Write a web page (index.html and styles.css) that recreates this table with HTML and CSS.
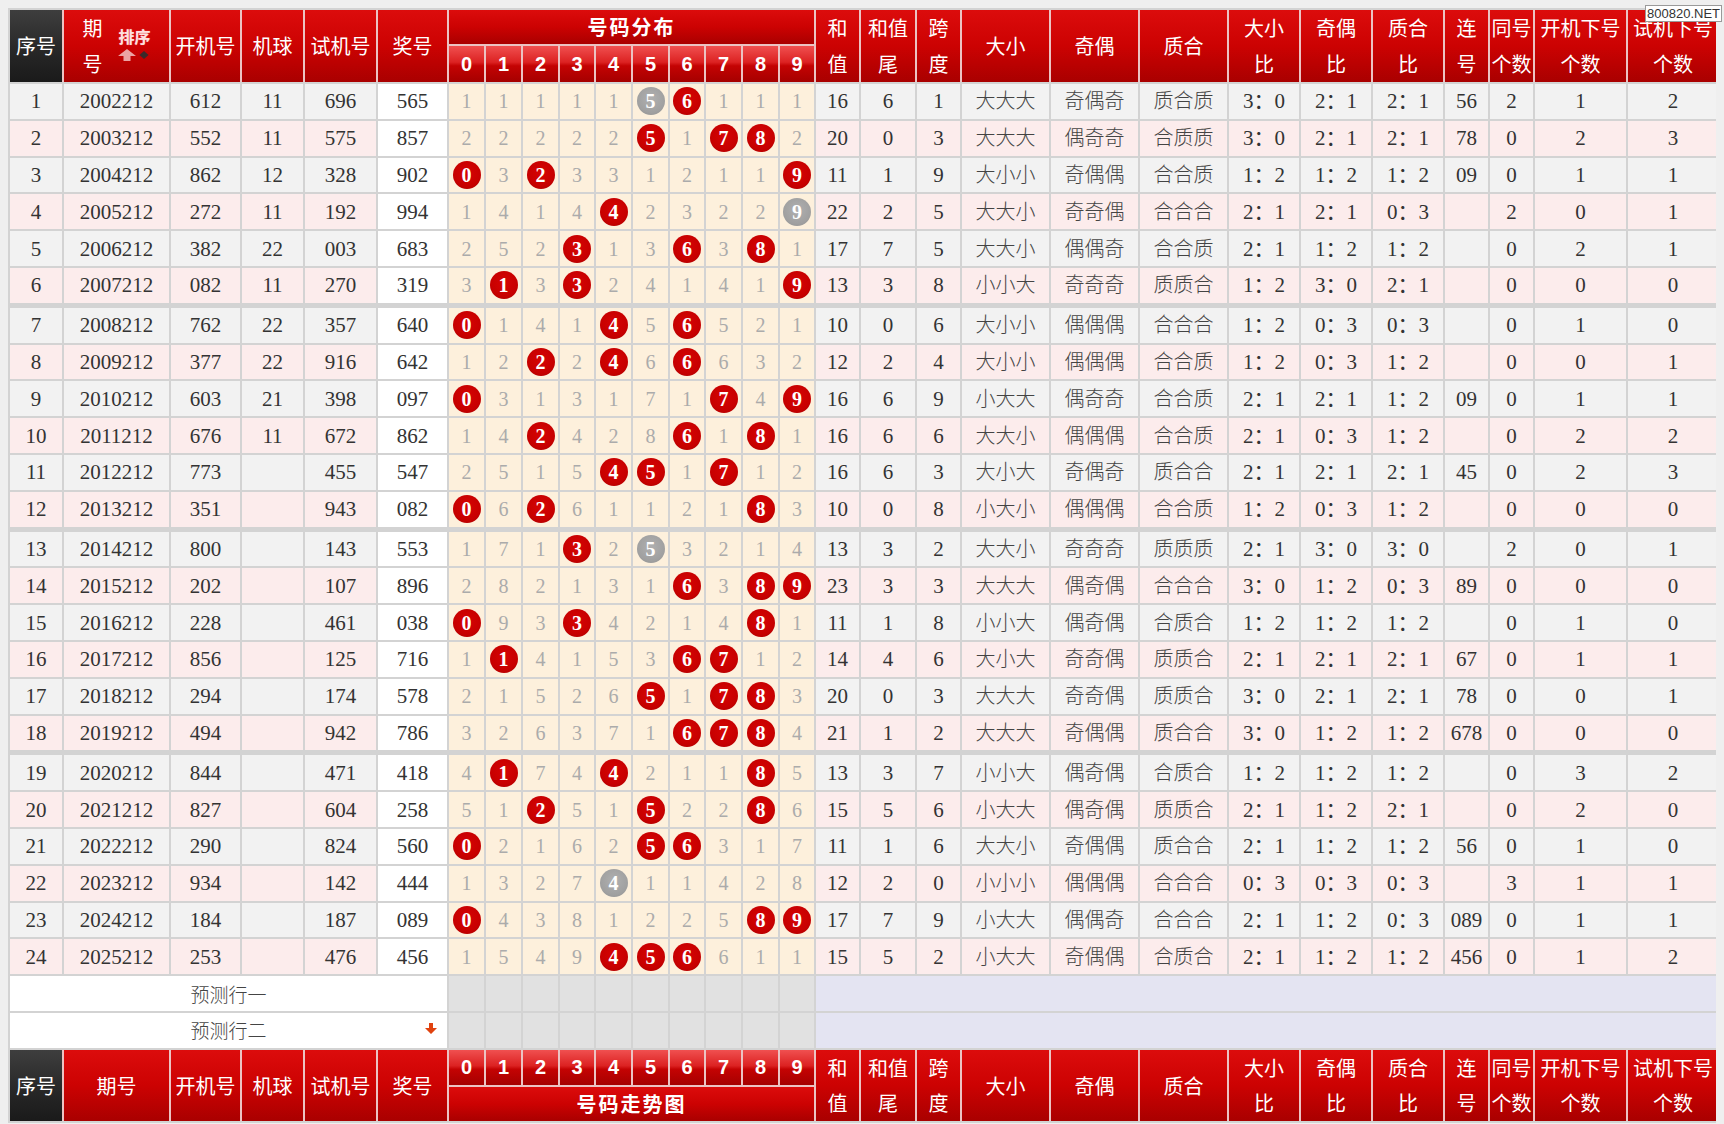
FILE: index.html
```html
<!DOCTYPE html>
<html lang="zh-CN">
<head>
<meta charset="utf-8">
<title>号码走势图</title>
<link rel="stylesheet" href="styles.css">
</head>
<body>
<div class="sheet">
  <div class="head">
    <span class="hc dark">序号</span>
    <span class="hc"><span class="qh">期<br>号</span><span class="sort"><span class="sort-t">排序</span><svg width="32" height="12" viewBox="0 0 32 12"><polygon points="9,0 18,7 12.5,7 12.5,12 5.5,12 5.5,7 0,7" fill="#eba3a3"/><polygon points="26,2 30.5,6 26,10 21.5,6" fill="#3a2a2a"/></svg></span></span>
    <span class="hc">开机号</span>
    <span class="hc">机球</span>
    <span class="hc">试机号</span>
    <span class="hc">奖号</span>
    <span class="hc zone">号码分布</span>
    <span class="hc">和<br>值</span>
    <span class="hc">和值<br>尾</span>
    <span class="hc">跨<br>度</span>
    <span class="hc">大小</span>
    <span class="hc">奇偶</span>
    <span class="hc">质合</span>
    <span class="hc">大小<br>比</span>
    <span class="hc">奇偶<br>比</span>
    <span class="hc">质合<br>比</span>
    <span class="hc">连<br>号</span>
    <span class="hc">同号<br>个数</span>
    <span class="hc">开机下号<br>个数</span>
    <span class="hc">试机下号<br>个数</span>
    <span class="hc dg">0</span><span class="hc dg">1</span><span class="hc dg">2</span><span class="hc dg">3</span><span class="hc dg">4</span><span class="hc dg">5</span><span class="hc dg">6</span><span class="hc dg">7</span><span class="hc dg">8</span><span class="hc dg">9</span>
  </div>

  <div class="r o"><span>1</span><span>2002212</span><span>612</span><span>11</span><span>696</span><span>565</span><span>1</span><span>1</span><span>1</span><span>1</span><span>1</span><span><b class="bl g">5</b></span><span><b class="bl">6</b></span><span>1</span><span>1</span><span>1</span><span>16</span><span>6</span><span>1</span><span>大大大</span><span>奇偶奇</span><span>质合质</span><span>3：0</span><span>2：1</span><span>2：1</span><span>56</span><span>2</span><span>1</span><span>2</span></div>
  <div class="r e"><span>2</span><span>2003212</span><span>552</span><span>11</span><span>575</span><span>857</span><span>2</span><span>2</span><span>2</span><span>2</span><span>2</span><span><b class="bl">5</b></span><span>1</span><span><b class="bl">7</b></span><span><b class="bl">8</b></span><span>2</span><span>20</span><span>0</span><span>3</span><span>大大大</span><span>偶奇奇</span><span>合质质</span><span>3：0</span><span>2：1</span><span>2：1</span><span>78</span><span>0</span><span>2</span><span>3</span></div>
  <div class="r o"><span>3</span><span>2004212</span><span>862</span><span>12</span><span>328</span><span>902</span><span><b class="bl">0</b></span><span>3</span><span><b class="bl">2</b></span><span>3</span><span>3</span><span>1</span><span>2</span><span>1</span><span>1</span><span><b class="bl">9</b></span><span>11</span><span>1</span><span>9</span><span>大小小</span><span>奇偶偶</span><span>合合质</span><span>1：2</span><span>1：2</span><span>1：2</span><span>09</span><span>0</span><span>1</span><span>1</span></div>
  <div class="r e"><span>4</span><span>2005212</span><span>272</span><span>11</span><span>192</span><span>994</span><span>1</span><span>4</span><span>1</span><span>4</span><span><b class="bl">4</b></span><span>2</span><span>3</span><span>2</span><span>2</span><span><b class="bl g">9</b></span><span>22</span><span>2</span><span>5</span><span>大大小</span><span>奇奇偶</span><span>合合合</span><span>2：1</span><span>2：1</span><span>0：3</span><span></span><span>2</span><span>0</span><span>1</span></div>
  <div class="r o"><span>5</span><span>2006212</span><span>382</span><span>22</span><span>003</span><span>683</span><span>2</span><span>5</span><span>2</span><span><b class="bl">3</b></span><span>1</span><span>3</span><span><b class="bl">6</b></span><span>3</span><span><b class="bl">8</b></span><span>1</span><span>17</span><span>7</span><span>5</span><span>大大小</span><span>偶偶奇</span><span>合合质</span><span>2：1</span><span>1：2</span><span>1：2</span><span></span><span>0</span><span>2</span><span>1</span></div>
  <div class="r e"><span>6</span><span>2007212</span><span>082</span><span>11</span><span>270</span><span>319</span><span>3</span><span><b class="bl">1</b></span><span>3</span><span><b class="bl">3</b></span><span>2</span><span>4</span><span>1</span><span>4</span><span>1</span><span><b class="bl">9</b></span><span>13</span><span>3</span><span>8</span><span>小小大</span><span>奇奇奇</span><span>质质合</span><span>1：2</span><span>3：0</span><span>2：1</span><span></span><span>0</span><span>0</span><span>0</span></div>

  <div class="r o gs"><span>7</span><span>2008212</span><span>762</span><span>22</span><span>357</span><span>640</span><span><b class="bl">0</b></span><span>1</span><span>4</span><span>1</span><span><b class="bl">4</b></span><span>5</span><span><b class="bl">6</b></span><span>5</span><span>2</span><span>1</span><span>10</span><span>0</span><span>6</span><span>大小小</span><span>偶偶偶</span><span>合合合</span><span>1：2</span><span>0：3</span><span>0：3</span><span></span><span>0</span><span>1</span><span>0</span></div>
  <div class="r e"><span>8</span><span>2009212</span><span>377</span><span>22</span><span>916</span><span>642</span><span>1</span><span>2</span><span><b class="bl">2</b></span><span>2</span><span><b class="bl">4</b></span><span>6</span><span><b class="bl">6</b></span><span>6</span><span>3</span><span>2</span><span>12</span><span>2</span><span>4</span><span>大小小</span><span>偶偶偶</span><span>合合质</span><span>1：2</span><span>0：3</span><span>1：2</span><span></span><span>0</span><span>0</span><span>1</span></div>
  <div class="r o"><span>9</span><span>2010212</span><span>603</span><span>21</span><span>398</span><span>097</span><span><b class="bl">0</b></span><span>3</span><span>1</span><span>3</span><span>1</span><span>7</span><span>1</span><span><b class="bl">7</b></span><span>4</span><span><b class="bl">9</b></span><span>16</span><span>6</span><span>9</span><span>小大大</span><span>偶奇奇</span><span>合合质</span><span>2：1</span><span>2：1</span><span>1：2</span><span>09</span><span>0</span><span>1</span><span>1</span></div>
  <div class="r e"><span>10</span><span>2011212</span><span>676</span><span>11</span><span>672</span><span>862</span><span>1</span><span>4</span><span><b class="bl">2</b></span><span>4</span><span>2</span><span>8</span><span><b class="bl">6</b></span><span>1</span><span><b class="bl">8</b></span><span>1</span><span>16</span><span>6</span><span>6</span><span>大大小</span><span>偶偶偶</span><span>合合质</span><span>2：1</span><span>0：3</span><span>1：2</span><span></span><span>0</span><span>2</span><span>2</span></div>
  <div class="r o"><span>11</span><span>2012212</span><span>773</span><span></span><span>455</span><span>547</span><span>2</span><span>5</span><span>1</span><span>5</span><span><b class="bl">4</b></span><span><b class="bl">5</b></span><span>1</span><span><b class="bl">7</b></span><span>1</span><span>2</span><span>16</span><span>6</span><span>3</span><span>大小大</span><span>奇偶奇</span><span>质合合</span><span>2：1</span><span>2：1</span><span>2：1</span><span>45</span><span>0</span><span>2</span><span>3</span></div>
  <div class="r e"><span>12</span><span>2013212</span><span>351</span><span></span><span>943</span><span>082</span><span><b class="bl">0</b></span><span>6</span><span><b class="bl">2</b></span><span>6</span><span>1</span><span>1</span><span>2</span><span>1</span><span><b class="bl">8</b></span><span>3</span><span>10</span><span>0</span><span>8</span><span>小大小</span><span>偶偶偶</span><span>合合质</span><span>1：2</span><span>0：3</span><span>1：2</span><span></span><span>0</span><span>0</span><span>0</span></div>

  <div class="r o gs"><span>13</span><span>2014212</span><span>800</span><span></span><span>143</span><span>553</span><span>1</span><span>7</span><span>1</span><span><b class="bl">3</b></span><span>2</span><span><b class="bl g">5</b></span><span>3</span><span>2</span><span>1</span><span>4</span><span>13</span><span>3</span><span>2</span><span>大大小</span><span>奇奇奇</span><span>质质质</span><span>2：1</span><span>3：0</span><span>3：0</span><span></span><span>2</span><span>0</span><span>1</span></div>
  <div class="r e"><span>14</span><span>2015212</span><span>202</span><span></span><span>107</span><span>896</span><span>2</span><span>8</span><span>2</span><span>1</span><span>3</span><span>1</span><span><b class="bl">6</b></span><span>3</span><span><b class="bl">8</b></span><span><b class="bl">9</b></span><span>23</span><span>3</span><span>3</span><span>大大大</span><span>偶奇偶</span><span>合合合</span><span>3：0</span><span>1：2</span><span>0：3</span><span>89</span><span>0</span><span>0</span><span>0</span></div>
  <div class="r o"><span>15</span><span>2016212</span><span>228</span><span></span><span>461</span><span>038</span><span><b class="bl">0</b></span><span>9</span><span>3</span><span><b class="bl">3</b></span><span>4</span><span>2</span><span>1</span><span>4</span><span><b class="bl">8</b></span><span>1</span><span>11</span><span>1</span><span>8</span><span>小小大</span><span>偶奇偶</span><span>合质合</span><span>1：2</span><span>1：2</span><span>1：2</span><span></span><span>0</span><span>1</span><span>0</span></div>
  <div class="r e"><span>16</span><span>2017212</span><span>856</span><span></span><span>125</span><span>716</span><span>1</span><span><b class="bl">1</b></span><span>4</span><span>1</span><span>5</span><span>3</span><span><b class="bl">6</b></span><span><b class="bl">7</b></span><span>1</span><span>2</span><span>14</span><span>4</span><span>6</span><span>大小大</span><span>奇奇偶</span><span>质质合</span><span>2：1</span><span>2：1</span><span>2：1</span><span>67</span><span>0</span><span>1</span><span>1</span></div>
  <div class="r o"><span>17</span><span>2018212</span><span>294</span><span></span><span>174</span><span>578</span><span>2</span><span>1</span><span>5</span><span>2</span><span>6</span><span><b class="bl">5</b></span><span>1</span><span><b class="bl">7</b></span><span><b class="bl">8</b></span><span>3</span><span>20</span><span>0</span><span>3</span><span>大大大</span><span>奇奇偶</span><span>质质合</span><span>3：0</span><span>2：1</span><span>2：1</span><span>78</span><span>0</span><span>0</span><span>1</span></div>
  <div class="r e"><span>18</span><span>2019212</span><span>494</span><span></span><span>942</span><span>786</span><span>3</span><span>2</span><span>6</span><span>3</span><span>7</span><span>1</span><span><b class="bl">6</b></span><span><b class="bl">7</b></span><span><b class="bl">8</b></span><span>4</span><span>21</span><span>1</span><span>2</span><span>大大大</span><span>奇偶偶</span><span>质合合</span><span>3：0</span><span>1：2</span><span>1：2</span><span>678</span><span>0</span><span>0</span><span>0</span></div>

  <div class="r o gs"><span>19</span><span>2020212</span><span>844</span><span></span><span>471</span><span>418</span><span>4</span><span><b class="bl">1</b></span><span>7</span><span>4</span><span><b class="bl">4</b></span><span>2</span><span>1</span><span>1</span><span><b class="bl">8</b></span><span>5</span><span>13</span><span>3</span><span>7</span><span>小小大</span><span>偶奇偶</span><span>合质合</span><span>1：2</span><span>1：2</span><span>1：2</span><span></span><span>0</span><span>3</span><span>2</span></div>
  <div class="r e"><span>20</span><span>2021212</span><span>827</span><span></span><span>604</span><span>258</span><span>5</span><span>1</span><span><b class="bl">2</b></span><span>5</span><span>1</span><span><b class="bl">5</b></span><span>2</span><span>2</span><span><b class="bl">8</b></span><span>6</span><span>15</span><span>5</span><span>6</span><span>小大大</span><span>偶奇偶</span><span>质质合</span><span>2：1</span><span>1：2</span><span>2：1</span><span></span><span>0</span><span>2</span><span>0</span></div>
  <div class="r o"><span>21</span><span>2022212</span><span>290</span><span></span><span>824</span><span>560</span><span><b class="bl">0</b></span><span>2</span><span>1</span><span>6</span><span>2</span><span><b class="bl">5</b></span><span><b class="bl">6</b></span><span>3</span><span>1</span><span>7</span><span>11</span><span>1</span><span>6</span><span>大大小</span><span>奇偶偶</span><span>质合合</span><span>2：1</span><span>1：2</span><span>1：2</span><span>56</span><span>0</span><span>1</span><span>0</span></div>
  <div class="r e"><span>22</span><span>2023212</span><span>934</span><span></span><span>142</span><span>444</span><span>1</span><span>3</span><span>2</span><span>7</span><span><b class="bl g">4</b></span><span>1</span><span>1</span><span>4</span><span>2</span><span>8</span><span>12</span><span>2</span><span>0</span><span>小小小</span><span>偶偶偶</span><span>合合合</span><span>0：3</span><span>0：3</span><span>0：3</span><span></span><span>3</span><span>1</span><span>1</span></div>
  <div class="r o"><span>23</span><span>2024212</span><span>184</span><span></span><span>187</span><span>089</span><span><b class="bl">0</b></span><span>4</span><span>3</span><span>8</span><span>1</span><span>2</span><span>2</span><span>5</span><span><b class="bl">8</b></span><span><b class="bl">9</b></span><span>17</span><span>7</span><span>9</span><span>小大大</span><span>偶偶奇</span><span>合合合</span><span>2：1</span><span>1：2</span><span>0：3</span><span>089</span><span>0</span><span>1</span><span>1</span></div>
  <div class="r e"><span>24</span><span>2025212</span><span>253</span><span></span><span>476</span><span>456</span><span>1</span><span>5</span><span>4</span><span>9</span><span><b class="bl">4</b></span><span><b class="bl">5</b></span><span><b class="bl">6</b></span><span>6</span><span>1</span><span>1</span><span>15</span><span>5</span><span>2</span><span>小大大</span><span>奇偶偶</span><span>合质合</span><span>2：1</span><span>1：2</span><span>1：2</span><span>456</span><span>0</span><span>1</span><span>2</span></div>

  <div class="pr"><span class="pl">预测行一</span><span class="pd"></span><span class="pd"></span><span class="pd"></span><span class="pd"></span><span class="pd"></span><span class="pd"></span><span class="pd"></span><span class="pd"></span><span class="pd"></span><span class="pd"></span><span class="pz"></span></div>
  <div class="pr"><span class="pl">预测行二<svg class="parrow" width="12" height="11" viewBox="0 0 12 11"><polygon points="4,0 8,0 8,5 12,5 6,11 0,5 4,5" fill="#e0420f"/></svg></span><span class="pd"></span><span class="pd"></span><span class="pd"></span><span class="pd"></span><span class="pd"></span><span class="pd"></span><span class="pd"></span><span class="pd"></span><span class="pd"></span><span class="pd"></span><span class="pz"></span></div>

  <div class="head foot">
    <span class="hc dark">序号</span>
    <span class="hc">期号</span>
    <span class="hc">开机号</span>
    <span class="hc">机球</span>
    <span class="hc">试机号</span>
    <span class="hc">奖号</span>
    <span class="hc dg">0</span><span class="hc dg">1</span><span class="hc dg">2</span><span class="hc dg">3</span><span class="hc dg">4</span><span class="hc dg">5</span><span class="hc dg">6</span><span class="hc dg">7</span><span class="hc dg">8</span><span class="hc dg">9</span>
    <span class="hc">和<br>值</span>
    <span class="hc">和值<br>尾</span>
    <span class="hc">跨<br>度</span>
    <span class="hc">大小</span>
    <span class="hc">奇偶</span>
    <span class="hc">质合</span>
    <span class="hc">大小<br>比</span>
    <span class="hc">奇偶<br>比</span>
    <span class="hc">质合<br>比</span>
    <span class="hc">连<br>号</span>
    <span class="hc">同号<br>个数</span>
    <span class="hc">开机下号<br>个数</span>
    <span class="hc">试机下号<br>个数</span>
    <span class="hc zone">号码走势图</span>
  </div>
</div>
<div class="wm">800820.NET</div>
</body>
</html>
```
FILE: styles.css
```css
:root {
  --cols: 52px 105px 69px 61px 71px 69px 35px 35px 35px 34px 35px 35px 34px 35px 35px 34px 43px 54px 43px 87px 87px 87px 70px 70px 70px 43px 43px 91px 90px;
}
html {
  background: #efefef;
}
body {
  margin: 8px;
  background: #efefef;
}
.sheet {
  width: 1712px;
  box-sizing: border-box;
  padding: 2px;
  background: #d3d3d3;
  display: flex;
  flex-direction: column;
  gap: 2px;
}

/* header / footer */
.head {
  display: grid;
  grid-template-columns: var(--cols);
  grid-template-rows: 34px 36px;
  gap: 2px;
  background: #ecc3c3;
}
.foot {
  grid-template-rows: 35px 34px;
}
.hc {
  grid-row: span 2;
  display: flex;
  align-items: center;
  justify-content: center;
  text-align: center;
  color: #fff;
  font: 20px/36px "Noto Sans CJK SC", "Liberation Sans", sans-serif;
  background: linear-gradient(#dc0c0c 0%, #cc0202 50%, #a90000 100%);
}
.foot .hc {
  line-height: 35px;
}
.hc.dark {
  background: linear-gradient(#3e3e3e 0%, #262626 60%, #1a1a1a 100%);
}
.hc.zone {
  grid-column: 7 / 17;
  grid-row: 1;
  font-weight: bold;
  letter-spacing: 2px;
}
.foot .hc.zone {
  grid-row: 2;
}
.hc.dg {
  grid-row: auto;
  font: bold 20px/1 "Liberation Sans", sans-serif;
  background: linear-gradient(#f05050 0%, #dc2222 45%, #c40303 55%, #a50000 100%);
}
.qh {
  width: 20px;
  margin-right: 16px;
  text-align: left;
}
.sort {
  display: flex;
  flex-direction: column;
  align-items: center;
  gap: 4px;
  margin-top: -4px;
}
.sort-t {
  font: bold 16px/17px "Noto Sans CJK SC", sans-serif;
  color: #fde0e0;
  text-shadow: 0 0 1px #f08080;
}

/* data rows */
.r, .pr {
  display: grid;
  grid-template-columns: var(--cols);
  column-gap: 2px;
  height: 34.8px;
}
.r > span {
  display: flex;
  align-items: center;
  justify-content: center;
  font: 21px/24px "Liberation Serif", "Noto Sans CJK SC", serif;
  color: #333;
}
.o > span {
  background: #f2f2f2;
}
.e > span {
  background: #fcecec;
}
.r > span:nth-child(6) {
  background: #fff;
}
.r > span:nth-child(n+7):nth-child(-n+16) {
  background: #fdf0dc;
  color: #ababab;
  font-size: 20px;
}
.r > span:nth-child(n+20):nth-child(-n+22) {
  font-size: 20px;
  font-weight: 300;
  color: #444;
}
.gs {
  margin-top: 3px;
}
.bl {
  display: flex;
  align-items: center;
  justify-content: center;
  width: 28px;
  height: 28px;
  border-radius: 50%;
  background: radial-gradient(circle at 50% 42%, #d60404 0%, #c70000 62%, #a30000 100%);
  color: #fff;
  font: bold 20px/1 "Liberation Serif", serif;
}
.bl.g {
  background: radial-gradient(circle at 50% 42%, #b0b0b0 0%, #a0a0a0 65%, #8c8c8c 100%);
}

/* prediction rows */
.pl {
  grid-column: 1 / 7;
  position: relative;
  display: flex;
  align-items: center;
  justify-content: center;
  background: #fff;
  color: #444;
  font: 300 19px/24px "Noto Sans CJK SC", sans-serif;
}
.pd {
  background: #e1e1e1;
}
.pz {
  grid-column: 17 / 30;
  background: #e4e4f2;
}
.parrow {
  position: absolute;
  right: 10px;
  top: 10px;
}

/* watermark badge */
.wm {
  position: absolute;
  top: 5px;
  left: 1645px;
  width: 75px;
  height: 15px;
  background: #fff;
  border: 1px solid #9a9a9a;
  font: 13px/15px "Liberation Sans", sans-serif;
  color: #333;
  text-align: center;
  white-space: nowrap;
}
```
